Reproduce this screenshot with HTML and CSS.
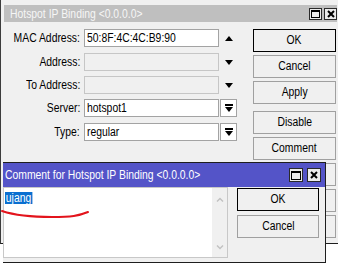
FILE: index.html
```html
<!DOCTYPE html>
<html>
<head>
<meta charset="utf-8">
<title>Hotspot IP Binding</title>
<link rel="stylesheet" href="styles.css">
</head>
<body>
<div class="desktop">
  <section class="win main-win">
    <header class="titlebar inactive">
      <span class="t t-l">Hotspot IP Binding &lt;0.0.0.0&gt;</span>
      <div class="tb-btns">
        <span class="tb-btn"><svg width="9" height="8" viewBox="0 0 9 8"><rect x="0.5" y="0.5" width="8" height="7" fill="none" stroke="#000"/><rect x="0" y="0" width="9" height="2" fill="#000"/></svg></span>
        <span class="tb-btn"><svg width="8" height="8" viewBox="0 0 8 8"><path d="M1 1L7 7M7 1L1 7" stroke="#000" stroke-width="2"/></svg></span>
      </div>
    </header>
    <div class="main-body">
      <div class="form">
        <div class="row">
          <label class="lbl"><span class="t t-r">MAC Address:</span></label>
          <div class="field"><span class="t t-l">50:8F:4C:4C:B9:90</span></div>
          <span class="trail"><svg width="8" height="5" viewBox="0 0 8 5"><polygon points="0,5 8,5 4,0" fill="#000"/></svg></span>
        </div>
        <div class="row">
          <label class="lbl"><span class="t t-r">Address:</span></label>
          <div class="field disabled"></div>
          <span class="trail"><svg width="8" height="5" viewBox="0 0 8 5"><polygon points="0,0 8,0 4,5" fill="#000"/></svg></span>
        </div>
        <div class="row">
          <label class="lbl"><span class="t t-r">To Address:</span></label>
          <div class="field disabled"></div>
          <span class="trail"><svg width="8" height="5" viewBox="0 0 8 5"><polygon points="0,0 8,0 4,5" fill="#000"/></svg></span>
        </div>
        <div class="row">
          <label class="lbl"><span class="t t-r">Server:</span></label>
          <div class="field"><span class="t t-l">hotspot1</span></div>
          <span class="trail drop"><svg width="8" height="8" viewBox="0 0 8 8"><rect x="0" y="0" width="8" height="2" fill="#000"/><polygon points="0,3 8,3 4,8" fill="#000"/></svg></span>
        </div>
        <div class="row">
          <label class="lbl"><span class="t t-r">Type:</span></label>
          <div class="field"><span class="t t-l">regular</span></div>
          <span class="trail drop"><svg width="8" height="8" viewBox="0 0 8 8"><rect x="0" y="0" width="8" height="2" fill="#000"/><polygon points="0,3 8,3 4,8" fill="#000"/></svg></span>
        </div>
      </div>
      <div class="btn-col">
        <button class="btn default"><span class="t">OK</span></button>
        <button class="btn"><span class="t">Cancel</span></button>
        <button class="btn"><span class="t">Apply</span></button>
        <button class="btn sep"><span class="t">Disable</span></button>
        <button class="btn"><span class="t">Comment</span></button>
        <button class="btn" aria-label="Copy"></button>
        <button class="btn" aria-label="Remove"></button>
        <button class="btn" aria-label="Reset"></button>
      </div>
    </div>
  </section>

  <section class="win comment-win">
    <header class="titlebar active">
      <span class="t t-l">Comment for Hotspot IP Binding &lt;0.0.0.0&gt;</span>
      <div class="tb-btns big">
        <span class="tb-btn"><svg width="10" height="9" viewBox="0 0 10 9"><rect x="0.5" y="0.5" width="9" height="8" fill="none" stroke="#000"/><rect x="0" y="0" width="10" height="2" fill="#000"/></svg></span>
        <span class="tb-btn"><svg width="8" height="8" viewBox="0 0 8 8"><path d="M1 1L7 7M7 1L1 7" stroke="#000" stroke-width="2"/></svg></span>
      </div>
    </header>
    <div class="dlg-body">
      <div class="memo">
        <div class="memo-text"><span class="t t-l sel">ujang</span></div>
        <div class="memo-scroll">
          <svg width="8" height="5" viewBox="0 0 8 5"><path d="M1 4.5L4 1.5L7 4.5" fill="none" stroke="#c2c2c2" stroke-width="1.5"/></svg>
          <svg width="8" height="5" viewBox="0 0 8 5"><path d="M1 0.5L4 3.5L7 0.5" fill="none" stroke="#c2c2c2" stroke-width="1.5"/></svg>
        </div>
      </div>
      <div class="dlg-btns">
        <button class="btn default"><span class="t">OK</span></button>
        <button class="btn"><span class="t">Cancel</span></button>
      </div>
    </div>
  </section>

  <svg class="scribble" width="338" height="278" viewBox="0 0 338 278">
    <path d="M2 211 C 14 215, 32 217, 52 217 S 78 216, 88 212" fill="none" stroke="#e3141c" stroke-width="2" stroke-linecap="round"/>
  </svg>
</div>
</body>
</html>
```

FILE: styles.css
```css
* { box-sizing: border-box; }

html, body {
  margin: 0;
  padding: 0;
}

body {
  background: #ffffff;
  font-family: "Liberation Sans", Arial, sans-serif;
  font-size: 12.5px;
  color: #000;
  width: 338px;
  height: 278px;
  overflow: hidden;
}

.desktop {
  position: relative;
  width: 338px;
  height: 278px;
  overflow: hidden;
}

/* condensed text, like the narrow UI font of the original */
.t {
  display: inline-block;
  white-space: nowrap;
  flex-shrink: 0;
  transform: scaleX(0.83);
  transform-origin: center center;
}

.t-l { transform-origin: left center; }
.t-r { transform-origin: right center; }

.win {
  position: absolute;
  background: #f0f0f0;
}

/* main window */
.main-win {
  left: 0;
  top: 0;
  width: 341px;
  height: 244px;
  border-left: 1px solid #3c3c3c;
  border-bottom: 1px solid #1e1e1e;
  padding: 5px 4px 0 3px;
}

.titlebar {
  display: flex;
  align-items: center;
  justify-content: space-between;
  white-space: nowrap;
}

.titlebar.inactive {
  height: 17px;
  background: #bfbfbf;
  color: #f6f6f6;
  padding-left: 6px;
}

.titlebar.active {
  height: 24px;
  background: #5454c8;
  color: #ffffff;
  padding-left: 2px;
  padding-right: 4px;
}

.tb-btns {
  display: flex;
  gap: 2px;
}

.tb-btn {
  width: 13px;
  height: 12px;
  border: 1px solid #2a2a2a;
  background: #ececec;
  display: flex;
  align-items: center;
  justify-content: center;
}

.tb-btns.big {
  gap: 4px;
}

.tb-btns.big .tb-btn {
  width: 14px;
  height: 14px;
}

.main-body {
  display: flex;
  padding-top: 7px;
}

.form {
  width: 233px;
  display: grid;
  grid-template-rows: 24px 23px 23px 24px 18px;
  align-content: start;
}

.row {
  display: flex;
  height: 18px;
}

.lbl {
  width: 76px;
  margin-right: 4px;
  display: flex;
  justify-content: flex-end;
  align-items: center;
}

.field {
  width: 135px;
  border: 1px solid #a3a3a3;
  background: #fff;
  padding: 0 2px;
  line-height: 16px;
  white-space: nowrap;
  overflow: hidden;
}

.field.disabled {
  background: #f0f0f0;
  border-color: #c6c6c6;
}

.trail {
  width: 17px;
  margin-left: 1px;
  display: flex;
  align-items: center;
  justify-content: center;
}

.trail.drop {
  border: 1px solid #a3a3a3;
  background: #fff;
}

.btn-col {
  margin-left: 16px;
  width: 83px;
  display: flex;
  flex-direction: column;
  gap: 3px;
}

.btn {
  display: block;
  width: 83px;
  height: 23px;
  padding: 0;
  margin: 0;
  border: 1px solid #a0a0a0;
  background: #f0f0f0;
  font-family: inherit;
  font-size: 12.5px;
  color: #000;
  text-align: center;
  line-height: 21px;
}

.btn.default {
  border-color: #000;
}

.btn.sep {
  margin-top: 4px;
}

/* comment dialog */
.comment-win {
  left: 3px;
  top: 162px;
  width: 323px;
  height: 101px;
  border-top: 1px solid #1e1e1e;
  border-right: 1px solid #1e1e1e;
  border-bottom: 1px solid #1e1e1e;
}

.dlg-body {
  display: flex;
}

.memo {
  width: 225px;
  height: 71px;
  border: 1px solid #c8c8c8;
  background: #fff;
  display: flex;
}

.memo-text {
  flex: 1;
  padding: 3px 1px;
}

.sel {
  height: 12px;
  line-height: 12px;
  background: #0a6fd0;
  color: #fff;
  padding: 0 1px;
}

.memo-scroll {
  width: 15px;
  background: #f0f0f0;
  display: flex;
  flex-direction: column;
  justify-content: space-between;
  align-items: center;
  padding: 9px 0 7px;
}

.dlg-btns {
  margin-left: 9px;
  padding-top: 1px;
  display: flex;
  flex-direction: column;
  gap: 4px;
}

.dlg-btns .btn {
  width: 82px;
}

.scribble {
  position: absolute;
  left: 0;
  top: 0;
  pointer-events: none;
}
```
